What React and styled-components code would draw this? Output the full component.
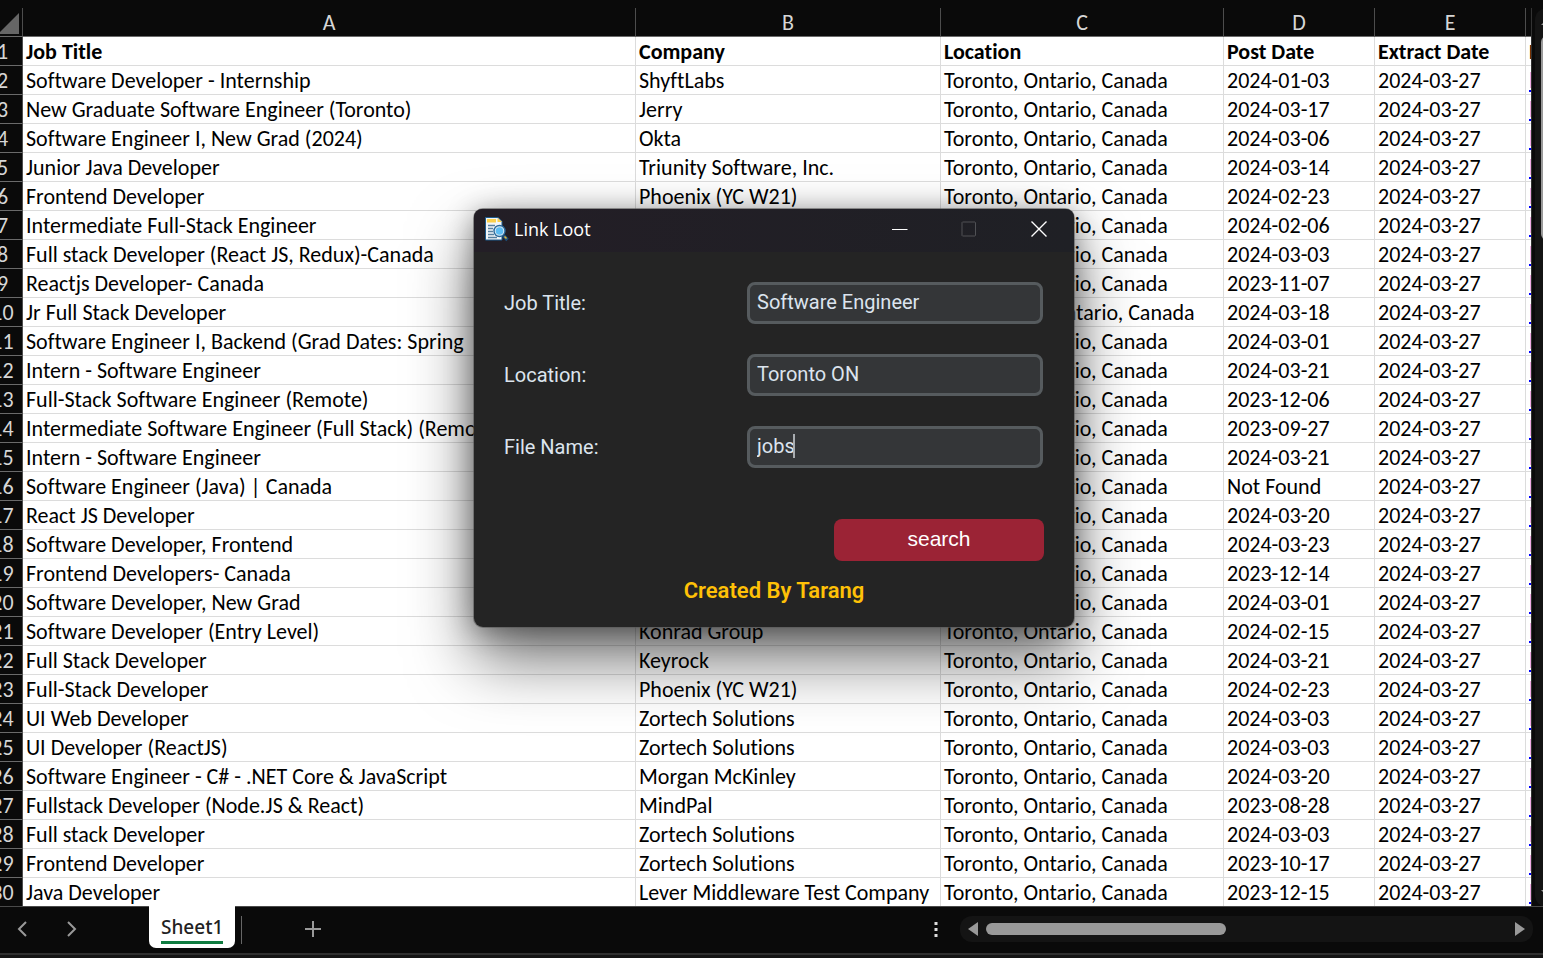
import React from "react";
import styled, { createGlobalStyle } from "styled-components";

const GlobalStyle = createGlobalStyle`
  *, *::before, *::after { box-sizing: border-box; }
  body { margin: 0; background: #0a0a0a; }
  button, input { font: inherit; }
`;

const SHEET_FONT = `Calibri, Carlito, Lato, "Noto Sans", sans-serif`;
const UI_FONT = `"Noto Sans", "Open Sans", sans-serif`;

const Page = styled.main`
  position: relative;
  display: flex;
  flex-direction: column;
  min-height: 100vh;
  padding-top: 8px;
  background: #0a0a0a;
  overflow: hidden;
`;

const SheetArea = styled.div`
  display: flex;
  flex: 1;
`;

const Viewport = styled.div`
  flex: 1;
  min-width: 0;
  overflow: hidden;
`;

/* The sheet is scrolled slightly, so the row numbers are cut at the left. */
const Grid = styled.table`
  width: 1800px;
  margin-left: -17px;
  table-layout: fixed;
  border-collapse: separate;
  border-spacing: 0;
  font-family: ${SHEET_FONT};
  font-size: 22px;
  font-variant-ligatures: none;
  line-height: 26px;
`;

const Col = styled.col`
  width: ${(p) => p.$width}px;
`;

const HeadCell = styled.th`
  height: 29px;
  padding: 2px 0 0;
  border-right: 1px solid #4d4d4d;
  border-bottom: 1px solid #6a6a6a;
  background: #0a0a0a;
  color: #d6d6d6;
  font-weight: 400;
  text-align: center;
  overflow: hidden;
`;

const Corner = styled.svg`
  display: block;
  width: 24px;
  height: 24px;
  margin-left: 14px;
`;

const Cell = styled.td`
  height: 29px;
  padding: 2px 0 0 3px;
  border-right: 1px solid #dcdcdc;
  border-bottom: 1px solid #dcdcdc;
  background: #fff;
  color: #000;
  font-weight: ${(p) => (p.$bold ? 700 : 400)};
  white-space: nowrap;
  overflow: hidden;
`;

const JobLink = styled.a`
  color: #c060e0;
  text-decoration: underline #0000ff;
`;

const VerticalBar = styled.div`
  display: flex;
  flex-direction: column;
  width: 12px;
  padding-left: 3px;
  border-left: 1px solid #333;
  overflow: hidden;
`;

const VerticalTrack = styled.div`
  flex: 1;
  display: flex;
  flex-direction: column;
  width: 26px;
  padding: 8px 6px;
  border-radius: 12px;
  background: #141414;
`;

const VerticalThumb = styled.div`
  width: 12px;
  height: 204px;
  margin: 8px 0 auto;
  border-radius: 6px;
  background: #999;
`;

const Footer = styled.footer`
  display: flex;
  height: 49px;
  margin-top: -1px;
  border-top: 1px solid #4a4a4a;
  border-bottom: 2px solid #303030;
  background: #0a0a0a;
  font-family: ${UI_FONT};
`;

const StatusStrip = styled.div`
  height: 3px;
  background: #151515;
`;

const IconButton = styled.button`
  display: grid;
  place-items: center;
  width: ${(p) => p.$width || 48}px;
  height: ${(p) => p.$height || 44}px;
  padding: 0;
  border: 0;
  background: transparent;
  color: ${(p) => p.$color || "#999"};
`;

const SheetTab = styled.button`
  height: 42px;
  width: 86px;
  margin: -1px 0 0 53px;
  padding: 0 12px 4px;
  border: 0;
  border-radius: 0 0 7px 7px;
  background: #fff;
  color: #222;
  font-size: 19px;
  font-weight: 500;
`;

const TabLabel = styled.span`
  display: block;
  height: 38px;
  line-height: 42px;
  border-bottom: 3px solid #107c41;
`;

const TabDivider = styled.span`
  width: 1px;
  height: 28px;
  margin: 9px 47px 0 6px;
  background: #666;
`;

const ScrollTools = styled.div`
  display: flex;
  margin-left: auto;
  padding-right: 10px;
`;

const HorizontalTrack = styled.div`
  display: flex;
  align-items: center;
  width: 573px;
  height: 26px;
  margin-top: 9px;
  border-radius: 12px;
  background: #141414;
`;

const HorizontalThumb = styled.div`
  width: 240px;
  height: 12px;
  margin-right: auto;
  border-radius: 6px;
  background: #999;
`;

const Dialog = styled.section`
  position: absolute;
  top: 209px;
  left: 474px;
  width: 600px;
  border-radius: 9px;
  background: #242424;
  box-shadow: 0 0 0 1px rgba(90, 90, 90, 0.6), 0 4px 28px rgba(0, 0, 0, 0.38),
    0 32px 64px rgba(0, 0, 0, 0.56);
  color: #dce4ee;
  font-family: Roboto, sans-serif;
  font-size: 20px;
`;

const TitleBar = styled.header`
  display: flex;
  align-items: center;
  height: 43px;
  padding: 0 0 3px 10px;
  border-radius: 8px 8px 0 0;
  background: linear-gradient(90deg, #231e26, #1f2025);
`;

const AppIcon = styled.svg`
  width: 26px;
  height: 26px;
  margin-right: 4px;
`;

const Title = styled.h1`
  flex: 1;
  margin: 0;
  color: #fff;
  font-family: "Open Sans", "Noto Sans", sans-serif;
  font-size: 18px;
  font-weight: 400;
`;

const Form = styled.form`
  display: flex;
  flex-direction: column;
  gap: 30px;
  padding: 30px 30px 18px;
`;

const Field = styled.div`
  display: flex;
  align-items: center;
  justify-content: space-between;
  height: 42px;
`;

const InputBox = styled.div`
  position: relative;
  width: 296px;
  margin-right: 1px;
`;

const Input = styled.input`
  display: block;
  width: 100%;
  height: 42px;
  padding: 0 7px 2px;
  border: 3px solid #565b5e;
  border-radius: 8px;
  background: #343638;
  color: #dce4ee;
  outline: 0;
`;

const Caret = styled.span`
  position: absolute;
  top: 8px;
  left: 46px;
  width: 2px;
  height: 24px;
  background: #a8acb0;
`;

const SearchButton = styled.button`
  align-self: flex-end;
  width: 210px;
  height: 42px;
  margin-top: 21px;
  padding: 0 0 2px;
  border: 0;
  border-radius: 8px;
  background: #9b2335;
  color: #fff;
  font-family: "Liberation Sans", Arial, sans-serif;
  font-size: 21px;
`;

const Credit = styled.p`
  margin: 0;
  padding-bottom: 24px;
  color: #ffc107;
  font-size: 22px;
  font-weight: 600;
  line-height: 24px;
  text-align: center;
`;

const TORONTO = "Toronto, Ontario, Canada";

const JOBS = [
  ["Software Developer - Internship", "ShyftLabs", "2024-01-03"],
  ["New Graduate Software Engineer (Toronto)", "Jerry", "2024-03-17"],
  ["Software Engineer I, New Grad (2024)", "Okta", "2024-03-06"],
  ["Junior Java Developer", "Triunity Software, Inc.", "2024-03-14"],
  ["Frontend Developer", "Phoenix (YC W21)", "2024-02-23"],
  ["Intermediate Full-Stack Engineer", "", "2024-02-06"],
  ["Full stack Developer (React JS, Redux)-Canada", "", "2024-03-03"],
  ["Reactjs Developer- Canada", "", "2023-11-07"],
  ["Jr Full Stack Developer", "", "2024-03-18", "North York, Ontario, Canada"],
  ["Software Engineer I, Backend (Grad Dates: Spring", "", "2024-03-01"],
  ["Intern - Software Engineer", "", "2024-03-21"],
  ["Full-Stack Software Engineer (Remote)", "", "2023-12-06"],
  ["Intermediate Software Engineer (Full Stack) (Remote)", "", "2023-09-27"],
  ["Intern - Software Engineer", "", "2024-03-21"],
  ["Software Engineer (Java) | Canada", "", "Not Found"],
  ["React JS Developer", "", "2024-03-20"],
  ["Software Developer, Frontend", "", "2024-03-23"],
  ["Frontend Developers- Canada", "", "2023-12-14"],
  ["Software Developer, New Grad", "", "2024-03-01"],
  ["Software Developer (Entry Level)", "Konrad Group", "2024-02-15"],
  ["Full Stack Developer", "Keyrock", "2024-03-21"],
  ["Full-Stack Developer", "Phoenix (YC W21)", "2024-02-23"],
  ["UI Web Developer", "Zortech Solutions", "2024-03-03"],
  ["UI Developer (ReactJS)", "Zortech Solutions", "2024-03-03"],
  ["Software Engineer - C# - .NET Core & JavaScript", "Morgan McKinley", "2024-03-20"],
  ["Fullstack Developer (Node.JS & React)", "MindPal", "2023-08-28"],
  ["Full stack Developer", "Zortech Solutions", "2024-03-03"],
  ["Frontend Developer", "Zortech Solutions", "2023-10-17"],
  ["Java Developer", "Lever Middleware Test Company", "2023-12-15"],
];

const COLUMNS = [
  ["A", 613, "Job Title"],
  ["B", 305, "Company"],
  ["C", 283, "Location"],
  ["D", 151, "Post Date"],
  ["E", 151, "Extract Date"],
  ["F", 257, "Link"],
];

const FIELDS = [
  ["title", "Job Title:", "Software Engineer"],
  ["location", "Location:", "Toronto ON"],
  ["file", "File Name:", "jobs"],
];

function Icon({ size = 20, d, fill = "none", width = 2 }) {
  return (
    <svg
      width={size}
      height={size}
      viewBox={`0 0 ${size} ${size}`}
      fill={fill}
      stroke={fill === "none" ? "currentColor" : "none"}
      strokeWidth={width}
      aria-hidden="true"
    >
      <path d={d} />
    </svg>
  );
}

function Spreadsheet() {
  return (
    <Grid>
      <colgroup>
        <Col $width={40} />
        {COLUMNS.map(([letter, width]) => (
          <Col key={letter} $width={width} />
        ))}
      </colgroup>
      <thead>
        <tr>
          <HeadCell aria-label="Select all">
            <Corner viewBox="0 0 24 24">
              <path d="M0 24 22 2V23H0Z" fill="#666" />
            </Corner>
          </HeadCell>
          {COLUMNS.map(([letter]) => (
            <HeadCell key={letter} scope="col">
              {letter}
            </HeadCell>
          ))}
        </tr>
      </thead>
      <tbody>
        <tr>
          <HeadCell scope="row">1</HeadCell>
          {COLUMNS.map(([letter, , name]) => (
            <Cell key={letter} $bold>
              {name}
            </Cell>
          ))}
        </tr>
        {JOBS.map(([title, company, posted, location = TORONTO], i) => (
          <tr key={i}>
            <HeadCell scope="row">{i + 2}</HeadCell>
            <Cell>{title}</Cell>
            <Cell>{company}</Cell>
            <Cell>{location}</Cell>
            <Cell>{posted}</Cell>
            <Cell>2024-03-27</Cell>
            <Cell>
              <JobLink href="#job">https</JobLink>
            </Cell>
          </tr>
        ))}
      </tbody>
    </Grid>
  );
}

function LinkLootDialog() {
  return (
    <Dialog aria-label="Link Loot">
      <TitleBar>
        <AppIcon viewBox="0 0 26 26" aria-hidden="true">
          <path d="M1.500 1.500H14l4 4V24H1.500Z" fill="#f1f5f9" stroke="#1d5b8c" />
          <path d="M3 3h9v3.500H3Z" fill="#fbd04b" />
          <path d="M13.500 2v4H18Z" fill="#fbd04b" />
          <path d="M4 9.500h7M4 12.500h5M4 15.500h5M4 18.500h6M4 21.500h9" stroke="#57809f" strokeWidth="1.400" />
          <circle cx="15.500" cy="15" r="5.500" fill="#dcecf6" stroke="#2a699b" strokeWidth="1.400" />
          <circle cx="15.500" cy="15" r="3.800" fill="#5dbcf2" />
          <path d="m19.500 19.500 4 4.500" stroke="#1d4f7a" strokeWidth="3.400" />
          <path d="m20.500 20.500 2 2" stroke="#e3b93b" strokeWidth="1.600" />
        </AppIcon>
        <Title>Link Loot</Title>
        <IconButton $width={69} $height={40} $color="#fff" aria-label="Minimize">
          <Icon size={16} d="M0 8.500H15.500" width={1} />
        </IconButton>
        <IconButton $width={69} $height={40} $color="#505155" aria-label="Maximize">
          <Icon size={16} d="M1.500 1H14L14.500 1.500V14.500L14 15H1.500L1 14.500V1.500Z" width={1} />
        </IconButton>
        <IconButton $width={71} $height={40} $color="#fff" aria-label="Close">
          <Icon size={16} d="M.5.5 15.500 15.500M15.500.5.5 15.500" width={1.4} />
        </IconButton>
      </TitleBar>
      <Form onSubmit={(e) => e.preventDefault()}>
        {FIELDS.map(([id, label, value]) => (
          <Field key={id}>
            <label htmlFor={id}>{label}</label>
            <InputBox>
              <Input id={id} type="text" defaultValue={value} />
              {id === "file" && <Caret />}
            </InputBox>
          </Field>
        ))}
        <SearchButton type="submit">search</SearchButton>
      </Form>
      <Credit>Created By Tarang</Credit>
    </Dialog>
  );
}

export default function App() {
  return (
    <Page>
      <GlobalStyle />
      <SheetArea>
        <Viewport>
          <Spreadsheet />
        </Viewport>
        <VerticalBar>
          <VerticalTrack>
            <Icon size={12} d="M6 3 12 9H0Z" fill="#999" />
            <VerticalThumb />
            <Icon size={12} d="M0 3H12L6 9Z" fill="#999" />
          </VerticalTrack>
        </VerticalBar>
      </SheetArea>
      <Footer>
        <IconButton aria-label="Previous sheet">
          <Icon d="M12 3 5 10l7 7" />
        </IconButton>
        <IconButton aria-label="Next sheet">
          <Icon d="m6 3 7 7-7 7" />
        </IconButton>
        <SheetTab>
          <TabLabel>Sheet1</TabLabel>
        </SheetTab>
        <TabDivider />
        <IconButton $width={48} aria-label="New sheet">
          <Icon d="M10 2V18M2 10H18" />
        </IconButton>
        <ScrollTools>
          <IconButton $color="#ddd" aria-label="Sheet options">
            <Icon size={18} d="M7.500 2h3v3h-3ZM7.500 8h3v3h-3ZM7.500 14h3v3h-3Z" fill="#ddd" />
          </IconButton>
          <HorizontalTrack>
            <IconButton $width={26} $height={26} aria-label="Scroll left">
              <Icon size={14} d="M12 0V14L2 7Z" fill="#999" />
            </IconButton>
            <HorizontalThumb />
            <IconButton $width={26} $height={26} aria-label="Scroll right">
              <Icon size={14} d="M2 0V14L12 7Z" fill="#999" />
            </IconButton>
          </HorizontalTrack>
        </ScrollTools>
      </Footer>
      <StatusStrip />
      <LinkLootDialog />
    </Page>
  );
}
